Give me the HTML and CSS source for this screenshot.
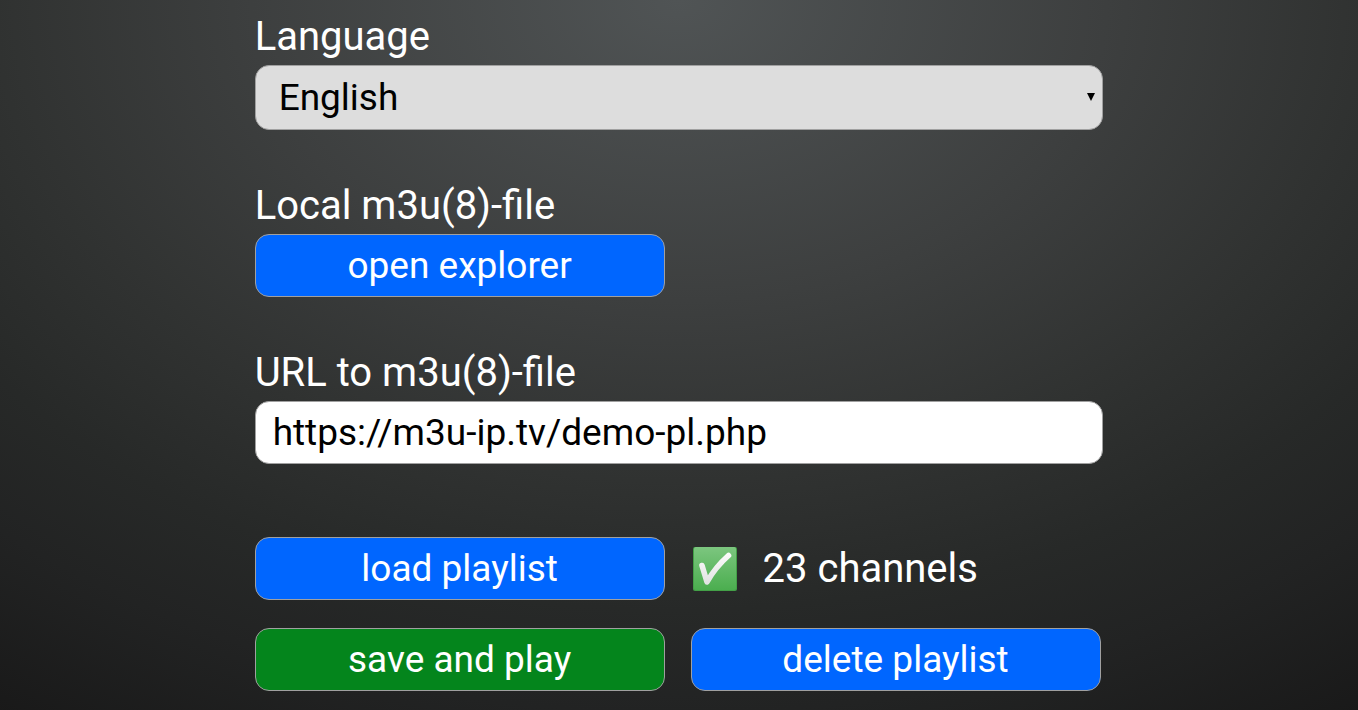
FILE: index.html
```html
<!DOCTYPE html>
<html lang="en">
<head>
<meta charset="utf-8">
<meta name="viewport" content="width=device-width, initial-scale=1">
<title>Playlist settings</title>
<link rel="stylesheet" href="styles.css">
</head>
<body>
<form class="settings">
  <div class="field">
    <label class="label" for="language">Language</label>
    <div class="select-wrap">
      <select class="control select" id="language">
        <option>English</option>
      </select>
      <svg class="arrow" viewBox="0 0 8 8" aria-hidden="true"><path d="M0 0h8L4 8z"/></svg>
    </div>
  </div>
  <div class="field">
    <label class="label" for="explorer">Local m3u(8)-file</label>
    <div class="row">
      <button class="control button" id="explorer" type="button">open explorer</button>
    </div>
  </div>
  <div class="field">
    <label class="label" for="url">URL to m3u(8)-file</label>
    <input class="control input" id="url" type="text" value="https://m3u-ip.tv/demo-pl.php">
  </div>
  <div class="row actions">
    <button class="control button" type="button">load playlist</button>
    <div class="status">
      <svg class="check" viewBox="0 0 44 44" aria-hidden="true">
        <defs>
          <linearGradient id="green" x1="0" y1="0" x2="0" y2="1">
            <stop offset="0" stop-color="#7cc67f"/>
            <stop offset="1" stop-color="#4bae4f"/>
          </linearGradient>
          <linearGradient id="tick" x1="0" y1="0" x2="0" y2="1">
            <stop offset="0" stop-color="#fafafa"/>
            <stop offset="1" stop-color="#e2e4e3"/>
          </linearGradient>
        </defs>
        <rect width="44" height="44" rx="2" fill="#43a047"/>
        <rect x="1" y="0" width="42" height="43" rx="2" fill="url(#green)"/>
        <path d="M9 18.500L14 35Q22 20.500 35.500 8.500" fill="none" stroke="url(#tick)" stroke-width="5.600" stroke-linecap="round" stroke-linejoin="round"/>
      </svg>
      <span>23 channels</span>
    </div>
    <button class="control button save" type="button">save and play</button>
    <button class="control button" type="button">delete playlist</button>
  </div>
</form>
</body>
</html>
```
FILE: styles.css
```css
* {
  box-sizing: border-box;
}

body {
  margin: 0;
  min-height: 100vh;
  background: radial-gradient(ellipse 90% 121% at 50% 0, #505455 0%, #3d3f3f 35%, #303231 56%, #272928 71%, #222323 83%, #191919 100%);
  color: #fff;
  font-family: Roboto, sans-serif;
  font-size: 40px;
  line-height: 48px;
}

.settings {
  display: flex;
  flex-direction: column;
  gap: 52px;
  width: 62.5%;
  margin: 0 auto;
  padding: 13px 0 18px;
}

.field {
  display: flex;
  flex-direction: column;
  gap: 4px;
}

.label {
  align-self: flex-start;
}

.control {
  width: 100%;
  height: 63px;
  margin: 0;
  border: 1px solid #a0a0a0;
  border-radius: 14px;
  font-family: inherit;
  font-size: 37px;
  line-height: 44px;
}

.select-wrap {
  position: relative;
  display: flex;
}

.select {
  height: 65px;
  padding: 0 23px;
  appearance: none;
  background: #ddd;
  color: #000;
}

.arrow {
  position: absolute;
  top: 28px;
  right: 8px;
  width: 8px;
  height: 8px;
  pointer-events: none;
}

.input {
  padding: 0 17px;
  background: #fff;
  color: #000;
}

.row {
  display: grid;
  grid-template-columns: repeat(2, 48.300%);
  gap: 28px 26px;
}

.actions {
  padding-top: 21px;
}

.button {
  padding: 0;
  background: #06f;
  color: #fff;
}

.save {
  background: #04851c;
}

.status {
  display: flex;
  align-items: center;
  gap: 26px;
  padding-left: 2px;
}

.check {
  width: 44px;
  height: 44px;
}
```
